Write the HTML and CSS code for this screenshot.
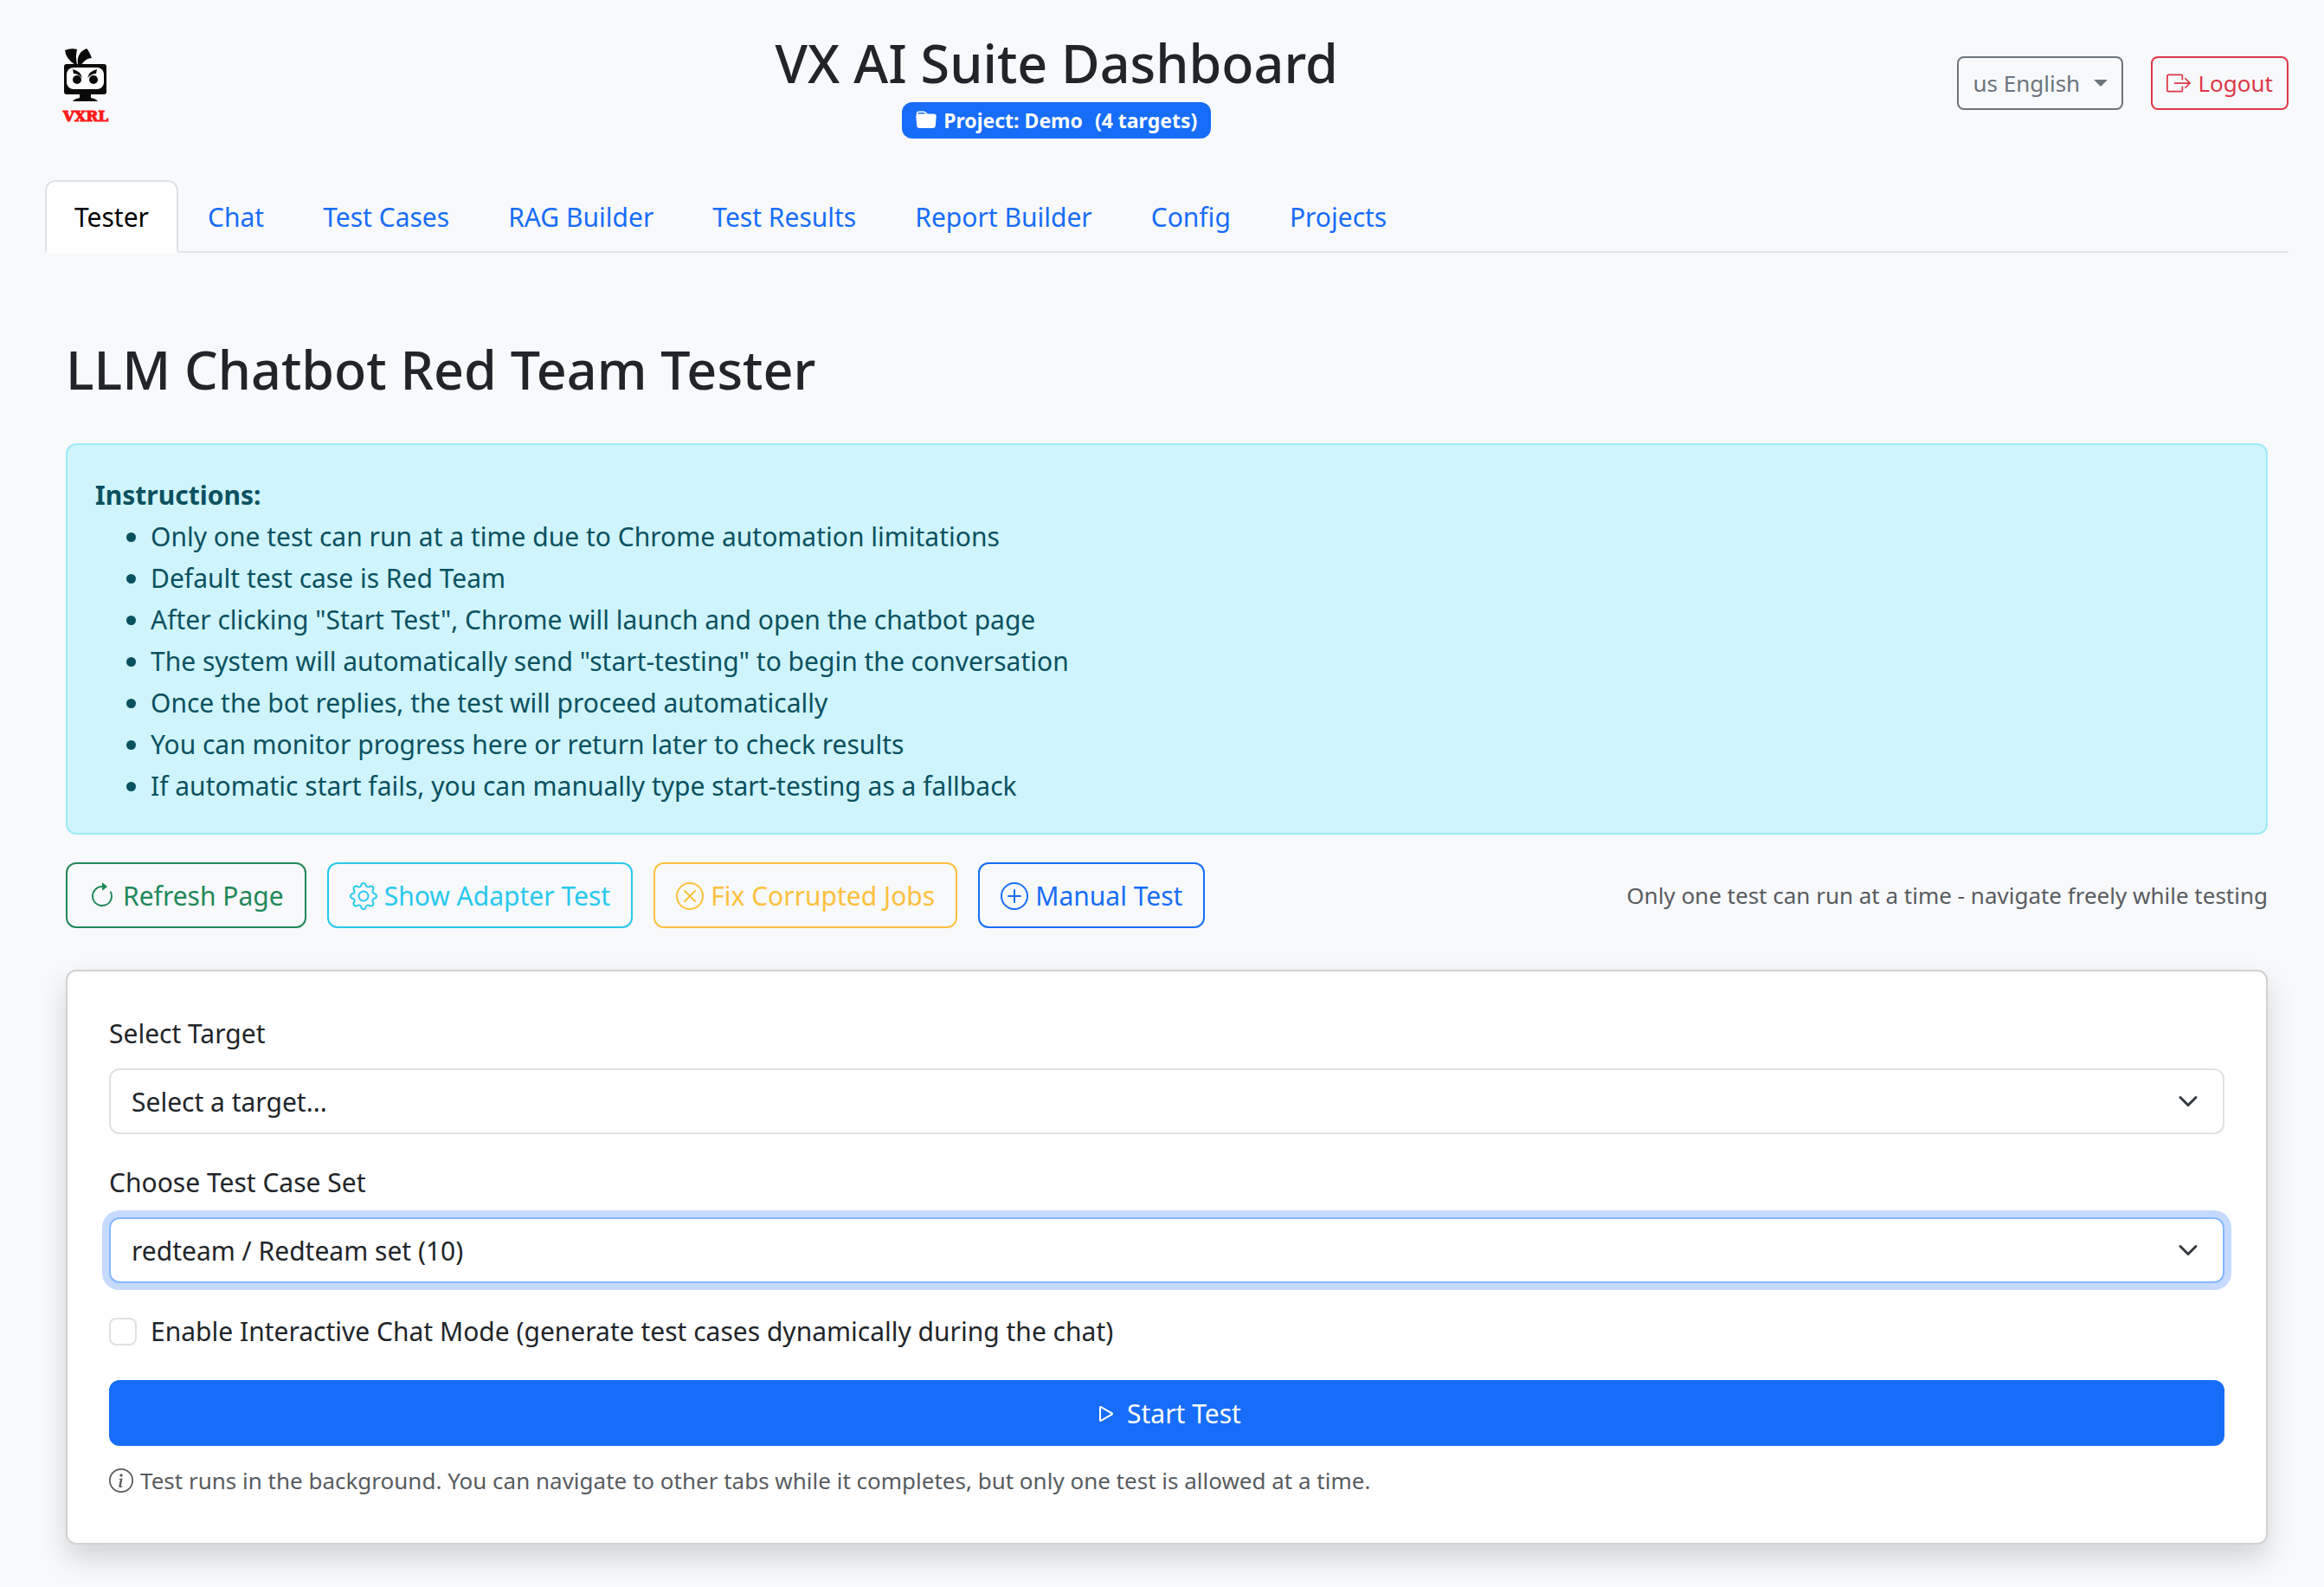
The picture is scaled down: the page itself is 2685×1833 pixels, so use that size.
FILE: index.html
```html
<!DOCTYPE html>
<html lang="en">
<head>
  <meta charset="UTF-8" />
  <meta name="viewport" content="width=device-width, initial-scale=1.0" />
  <title>VX AI Suite Dashboard</title>
  <link rel="stylesheet" href="styles.css">
</head>
<body>
  <header class="topbar">
    <a href="#" class="logo" aria-label="VXRL">
      <svg width="60" height="96" viewBox="0 0 60 96">
        <path d="M7 10Q14 7 21 9Q19 17 21 27H19Q8 20 7 10Z" fill="#0a0a0a"/>
        <path d="M22 27Q20 13 32 8Q35 11 38 19Q31 19 26 27Z" fill="#0a0a0a"/>
        <rect x="6" y="26" width="49" height="35" rx="3" fill="#0a0a0a"/>
        <rect x="9" y="30" width="43" height="25" rx="8" fill="#fff"/>
        <path d="M16 32Q25 34 27 42Q22 37 17 37ZM44 32Q35 34 33 42Q38 37 43 37Z" fill="#0a0a0a"/>
        <circle cx="21" cy="44" r="5" fill="#0a0a0a"/>
        <circle cx="40" cy="44" r="5" fill="#0a0a0a"/>
        <path d="M24 60H37V65Q43 66 45 69H16Q18 66 24 65Z" fill="#0a0a0a"/>
        <text x="31" y="92" text-anchor="middle" class="logo-text">VXRL</text>
      </svg>
    </a>
    <div class="brand">
      <h1>VX AI Suite Dashboard</h1>
      <span class="badge">
        <svg class="icon" viewBox="0 0 16 16"><path d="M9.828 3h3.982a2 2 0 0 1 1.992 2.181l-.637 7A2 2 0 0 1 13.174 14H2.825a2 2 0 0 1-1.991-1.819l-.637-7a2 2 0 0 1 .342-1.31L.5 3a2 2 0 0 1 2-2h3.672a2 2 0 0 1 1.414.586l.828.828A2 2 0 0 0 9.828 3m-8.322.12q.322-.119.684-.12h5.396l-.707-.707A1 1 0 0 0 6.172 2H2.5a1 1 0 0 0-1 .981z"/></svg>
        <span>Project: Demo</span>
        <span>(4 targets)</span>
      </span>
    </div>
    <div class="actions">
      <select class="lang" aria-label="Language">
        <option>us English</option>
      </select>
      <button type="button" class="btn btn-sm btn-danger">
        <svg class="icon" viewBox="0 0 16 16"><path d="M10 12.5a.5.5 0 0 1-.5.5h-8a.5.5 0 0 1-.5-.5v-9a.5.5 0 0 1 .5-.5h8a.5.5 0 0 1 .5.5v2a.5.5 0 0 0 1 0v-2A1.5 1.5 0 0 0 9.5 2h-8A1.5 1.5 0 0 0 0 3.5v9A1.5 1.5 0 0 0 1.5 14h8a1.5 1.5 0 0 0 1.5-1.5v-2a.5.5 0 0 0-1 0z"/><path d="M15.854 8.354a.5.5 0 0 0 0-.708l-3-3a.5.5 0 0 0-.708.708L14.293 7.5H5.5a.5.5 0 0 0 0 1h8.793l-2.147 2.146a.5.5 0 0 0 .708.708z"/></svg>
        Logout
      </button>
    </div>
  </header>

  <nav class="tabs">
    <a href="#tester" class="tab active">Tester</a>
    <a href="#chat" class="tab">Chat</a>
    <a href="#cases" class="tab">Test Cases</a>
    <a href="#rag" class="tab">RAG Builder</a>
    <a href="#results" class="tab">Test Results</a>
    <a href="#report" class="tab">Report Builder</a>
    <a href="#config" class="tab">Config</a>
    <a href="#projects" class="tab">Projects</a>
  </nav>

  <main class="content">
    <h2>LLM Chatbot Red Team Tester</h2>

    <div class="alert">
      <strong>Instructions:</strong>
      <ul>
        <li>Only one test can run at a time due to Chrome automation limitations</li>
        <li>Default test case is Red Team</li>
        <li>After clicking "Start Test", Chrome will launch and open the chatbot page</li>
        <li>The system will automatically send "start-testing" to begin the conversation</li>
        <li>Once the bot replies, the test will proceed automatically</li>
        <li>You can monitor progress here or return later to check results</li>
        <li>If automatic start fails, you can manually type start-testing as a fallback</li>
      </ul>
    </div>

    <div class="toolbar">
      <button type="button" class="btn btn-success">
        <svg class="icon" viewBox="0 0 16 16"><path fill-rule="evenodd" d="M8 3a5 5 0 1 0 4.546 2.914.5.5 0 0 1 .908-.417A6 6 0 1 1 8 2z"/><path d="M8 4.466V.534a.25.25 0 0 1 .41-.192l2.36 1.966c.12.1.12.284 0 .384L8.41 4.658A.25.25 0 0 1 8 4.466"/></svg>
        Refresh Page
      </button>
      <button type="button" class="btn btn-info">
        <svg class="icon" viewBox="0 0 16 16"><path d="M8 4.754a3.246 3.246 0 1 0 0 6.492 3.246 3.246 0 0 0 0-6.492zM5.754 8a2.246 2.246 0 1 1 4.492 0 2.246 2.246 0 0 1-4.492 0z"/><path d="M9.796 1.343c-.527-1.79-3.065-1.79-3.592 0l-.094.319a.873.873 0 0 1-1.255.52l-.292-.16c-1.64-.892-3.433.902-2.54 2.541l.159.292a.873.873 0 0 1-.52 1.255l-.319.094c-1.79.527-1.79 3.065 0 3.592l.319.094a.873.873 0 0 1 .52 1.255l-.16.292c-.892 1.64.901 3.434 2.541 2.54l.292-.159a.873.873 0 0 1 1.255.52l.094.319c.527 1.79 3.065 1.79 3.592 0l.094-.319a.873.873 0 0 1 1.255-.52l.292.16c1.64.893 3.434-.902 2.54-2.541l-.159-.292a.873.873 0 0 1 .52-1.255l.319-.094c1.79-.527 1.79-3.065 0-3.592l-.319-.094a.873.873 0 0 1-.52-1.255l.16-.292c.893-1.64-.902-3.433-2.541-2.54l-.292.159a.873.873 0 0 1-1.255-.52l-.094-.319zm-2.633.283c.246-.835 1.428-.835 1.674 0l.094.319a1.873 1.873 0 0 0 2.693 1.115l.291-.16c.764-.415 1.6.42 1.184 1.185l-.159.292a1.873 1.873 0 0 0 1.116 2.692l.318.094c.835.246.835 1.428 0 1.674l-.319.094a1.873 1.873 0 0 0-1.115 2.693l.16.291c.415.764-.42 1.6-1.185 1.184l-.291-.159a1.873 1.873 0 0 0-2.693 1.116l-.094.318c-.246.835-1.428.835-1.674 0l-.094-.319a1.873 1.873 0 0 0-2.692-1.115l-.292.16c-.764.415-1.6-.42-1.184-1.185l.159-.291A1.873 1.873 0 0 0 1.945 8.93l-.319-.094c-.835-.246-.835-1.428 0-1.674l.319-.094A1.873 1.873 0 0 0 3.06 4.377l-.16-.292c-.415-.764.42-1.6 1.185-1.184l.292.159a1.873 1.873 0 0 0 2.692-1.115l.094-.319z"/></svg>
        Show Adapter Test
      </button>
      <button type="button" class="btn btn-warning">
        <svg class="icon" viewBox="0 0 16 16"><path d="M8 15A7 7 0 1 1 8 1a7 7 0 0 1 0 14m0 1A8 8 0 1 0 8 0a8 8 0 0 0 0 16"/><path d="M4.646 4.646a.5.5 0 0 1 .708 0L8 7.293l2.646-2.647a.5.5 0 0 1 .708.708L8.707 8l2.647 2.646a.5.5 0 0 1-.708.708L8 8.707l-2.646 2.647a.5.5 0 0 1-.708-.708L7.293 8 4.646 5.354a.5.5 0 0 1 0-.708"/></svg>
        Fix Corrupted Jobs
      </button>
      <button type="button" class="btn btn-primary">
        <svg class="icon" viewBox="0 0 16 16"><path d="M8 15A7 7 0 1 1 8 1a7 7 0 0 1 0 14m0 1A8 8 0 1 0 8 0a8 8 0 0 0 0 16"/><path d="M8 4a.5.5 0 0 1 .5.5v3h3a.5.5 0 0 1 0 1h-3v3a.5.5 0 0 1-1 0v-3h-3a.5.5 0 0 1 0-1h3v-3A.5.5 0 0 1 8 4"/></svg>
        Manual Test
      </button>
      <span class="muted note">Only one test can run at a time - navigate freely while testing</span>
    </div>

    <form class="card">
      <div class="field">
        <label for="target">Select Target</label>
        <select id="target" class="select">
          <option>Select a target...</option>
        </select>
      </div>
      <div class="field">
        <label for="case-set">Choose Test Case Set</label>
        <select id="case-set" class="select focused">
          <option>redteam / Redteam set (10)</option>
        </select>
      </div>
      <div class="check">
        <input type="checkbox" id="interactive">
        <label for="interactive">Enable Interactive Chat Mode (generate test cases dynamically during the chat)</label>
      </div>
      <button type="button" class="btn btn-start">
        <svg class="icon" viewBox="0 0 16 16"><path d="M10.804 8 5 4.633v6.734zm.792-.696a.802.802 0 0 1 0 1.392l-6.363 3.692C4.713 12.69 4 12.345 4 11.692V4.308c0-.653.713-.998 1.233-.696z"/></svg>
        Start Test
      </button>
      <p class="muted hint">
        <svg class="icon" viewBox="0 0 16 16"><path d="M8 15A7 7 0 1 1 8 1a7 7 0 0 1 0 14m0 1A8 8 0 1 0 8 0a8 8 0 0 0 0 16"/><path d="m8.93 6.588-2.29.287-.082.38.45.083c.294.07.352.176.288.469l-.738 3.468c-.194.897.105 1.319.808 1.319.545 0 1.178-.252 1.465-.598l.088-.416c-.2.176-.492.246-.686.246-.275 0-.375-.193-.304-.533zM9 4.5a1 1 0 1 1-2 0 1 1 0 0 1 2 0"/></svg>
        Test runs in the background. You can navigate to other tabs while it completes, but only one test is allowed at a time.
      </p>
    </form>
  </main>
</body>
</html>
```
FILE: styles.css
```css
* {
  box-sizing: border-box;
}

body {
  margin: 0;
  padding: 32px 41px 48px 52px;
  font-family: "Segoe UI", "Noto Sans", sans-serif;
  font-size: 30px;
  line-height: 48px;
  color: #212529;
  background: #f8f9fb;
}

h1, h2 {
  margin: 0;
  padding-top: 4px;
  font-size: 61px;
  font-weight: 500;
  line-height: 74px;
}

select, button, input {
  font: inherit;
  color: inherit;
}

.icon {
  width: 32px;
  height: 32px;
  fill: currentColor;
  flex: none;
}

/* Header */
.topbar {
  display: flex;
  justify-content: space-between;
  align-items: center;
  margin-bottom: 48px;
}

.logo {
  display: flex;
  width: 128px;
  padding-left: 16px;
}

.logo-text {
  font-family: "DejaVu Serif", serif;
  font-size: 17px;
  font-weight: bold;
  fill: #ff1a1a;
  stroke: #ff1a1a;
}

.brand {
  display: flex;
  flex-direction: column;
  align-items: center;
  gap: 8px;
}

.badge {
  display: flex;
  align-items: center;
  gap: 8px;
  padding: 0 16px;
  font-size: 23px;
  font-weight: 700;
  line-height: 42px;
  color: #fff;
  background: #176df8;
  border-radius: 12px;
}

.badge .icon {
  width: 24px;
  height: 24px;
}

.badge span + span {
  margin-left: 6px;
}

.actions {
  display: flex;
  gap: 32px;
}

.lang {
  appearance: none;
  height: 62px;
  padding: 0 48px 0 16px;
  font-size: 26px;
  color: #6c757d;
  border: 2px solid #6c757d;
  border-radius: 8px;
  background: url("data:image/svg+xml,%3Csvg xmlns='http://www.w3.org/2000/svg' viewBox='0 0 16 8'%3E%3Cpath fill='%236c757d' d='M0 0h16L8 8z'/%3E%3C/svg%3E") no-repeat right 16px center / 16px 8px;
}

/* Buttons */
.btn {
  display: flex;
  align-items: center;
  justify-content: center;
  gap: 8px;
  padding: 13px 24px 11px;
  background: transparent;
  border: 2px solid;
  border-radius: 12px;
  white-space: nowrap;
}

.btn-sm {
  padding: 5px 16px;
  font-size: 26px;
  border-radius: 8px;
}

.btn-sm .icon {
  width: 28px;
  height: 28px;
}

.btn-danger { color: #dc3848; }
.btn-success { color: #22885a; }
.btn-info { color: #28c8ee; }
.btn-warning { color: #fdc03e; }
.btn-primary { color: #176df8; }

.btn-start {
  width: 100%;
  color: #fff;
  background: #176df8;
  border-color: #176df8;
}

/* Tabs */
.tabs {
  display: flex;
  border-bottom: 2px solid #dee2e6;
}

.tab {
  padding: 17px 32px 15px;
  margin-bottom: -2px;
  color: #176df8;
  text-decoration: none;
  border: 2px solid transparent;
  border-radius: 12px 12px 0 0;
}

.tab.active {
  color: #000;
  background: #fff;
  border-color: #dee2e6 #dee2e6 #fff;
}

/* Content */
.content {
  padding: 94px 24px 0;
}

.alert {
  margin: 48px 0 32px;
  padding: 34px 32px 30px;
  color: #0a5160;
  background: #cff4fc;
  border: 2px solid #9eeaf9;
  border-radius: 12px;
}

.alert ul {
  margin: 0;
  padding-left: 64px;
}

.toolbar {
  display: flex;
  align-items: center;
  gap: 24px;
  margin-bottom: 48px;
}

.muted {
  font-size: 26px;
  color: #585c5f;
}

.note {
  margin-left: auto;
}

.card {
  padding: 48px;
  background: #fff;
  border: 2px solid #d1d2d3;
  border-radius: 12px;
  box-shadow: 0 16px 32px rgba(0, 0, 0, 0.15);
}

.field {
  display: flex;
  flex-direction: column;
  gap: 16px;
  margin-bottom: 32px;
}

.select {
  appearance: none;
  width: 100%;
  height: 76px;
  padding: 2px 72px 0 24px;
  border: 2px solid #dee2e6;
  border-radius: 12px;
  background: #fff url("data:image/svg+xml,%3Csvg xmlns='http://www.w3.org/2000/svg' viewBox='0 0 16 16'%3E%3Cpath fill='none' stroke='%23343a40' stroke-linecap='round' stroke-linejoin='round' stroke-width='2' d='m2 5 6 6 6-6'/%3E%3C/svg%3E") no-repeat right 28px center / 24px 24px;
}

.select.focused {
  border-color: #86b7fe;
  box-shadow: 0 0 0 8px #c5dafe;
}

.check {
  display: flex;
  align-items: center;
  gap: 16px;
  margin-bottom: 32px;
}

.check input {
  appearance: none;
  width: 32px;
  height: 32px;
  margin: 0;
  background: #fff;
  border: 2px solid #dee2e6;
  border-radius: 8px;
}

.hint {
  display: flex;
  align-items: center;
  gap: 8px;
  margin: 16px 0 0;
}

.hint .icon {
  width: 28px;
  height: 28px;
}
```
